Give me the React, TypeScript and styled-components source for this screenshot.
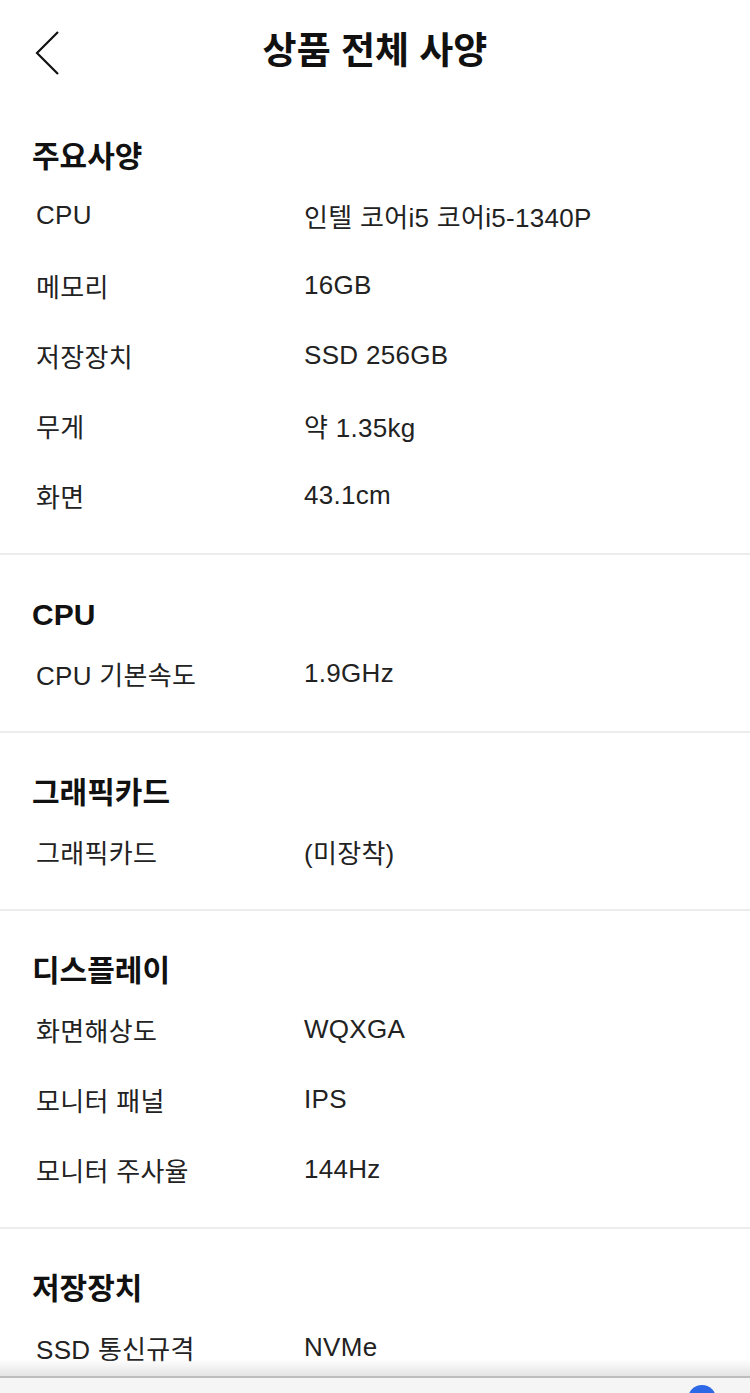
import React from 'react';
import styled, { createGlobalStyle } from 'styled-components';

const GlobalStyle = createGlobalStyle`
  html, body {
    margin: 0;
    padding: 0;
    background: #ffffff;
  }
  body {
    font-family: "Liberation Sans", "Noto Sans CJK KR", sans-serif;
    color: #1c1c1c;
  }
`;

interface SpecRow {
  label: string;
  value: string;
}

interface SpecGroup {
  title: string;
  rows: SpecRow[];
}

const groups: SpecGroup[] = [
  {
    title: '주요사양',
    rows: [
      { label: 'CPU', value: '인텔 코어i5 코어i5-1340P' },
      { label: '메모리', value: '16GB' },
      { label: '저장장치', value: 'SSD 256GB' },
      { label: '무게', value: '약 1.35kg' },
      { label: '화면', value: '43.1cm' }
    ]
  },
  {
    title: 'CPU',
    rows: [{ label: 'CPU 기본속도', value: '1.9GHz' }]
  },
  {
    title: '그래픽카드',
    rows: [{ label: '그래픽카드', value: '(미장착)' }]
  },
  {
    title: '디스플레이',
    rows: [
      { label: '화면해상도', value: 'WQXGA' },
      { label: '모니터 패널', value: 'IPS' },
      { label: '모니터 주사율', value: '144Hz' }
    ]
  },
  {
    title: '저장장치',
    rows: [{ label: 'SSD 통신규격', value: 'NVMe' }]
  }
];

const Screen = styled.div`
  position: relative;
  width: 750px;
  height: 1393px;
  overflow: hidden;
  background: #ffffff;
`;

const Header = styled.header`
  position: relative;
  height: 104px;
  display: flex;
  align-items: center;
  justify-content: center;
`;

const BackButton = styled.button`
  position: absolute;
  left: 30px;
  top: 28px;
  width: 34px;
  height: 50px;
  padding: 0;
  border: none;
  background: none;
  display: flex;
  align-items: center;
  justify-content: center;
`;

const Title = styled.h1`
  margin: 0;
  font-size: 37px;
  font-weight: 700;
  line-height: 44px;
  color: #111111;
`;

const Section = styled.section<{ $first?: boolean }>`
  padding: ${p => (p.$first ? '33px' : '40px')} 32px 23px;
  border-bottom: 2px solid #ececec;
`;

const SectionTitle = styled.h2`
  margin: 0 0 3px;
  height: 40px;
  font-size: 30px;
  font-weight: 700;
  line-height: 40px;
  color: #111111;
`;

const Row = styled.div`
  display: flex;
  align-items: center;
  height: 70px;
  padding-left: 4px;
  font-size: 26px;
  color: #222222;
  letter-spacing: 0.3px;
`;

const Label = styled.div`
  width: 268px;
  flex-shrink: 0;
`;

const Value = styled.div`
  flex: 1;
`;

const BottomBar = styled.div`
  position: absolute;
  left: 0;
  right: 0;
  bottom: 0;
  height: 34px;
  display: flex;
  flex-direction: column;
`;

const BarShade = styled.div`
  height: 17px;
  background: linear-gradient(to bottom, rgba(235, 235, 235, 0) 0%, rgba(225, 225, 225, 0.9) 100%);
`;

const BarBody = styled.div`
  position: relative;
  flex: 1;
  border-top: 2px solid #bdbdbd;
  background: #f5f5f5;
`;

const BlueDot = styled.span`
  position: absolute;
  left: 688px;
  top: 7px;
  width: 28px;
  height: 28px;
  border-radius: 50%;
  background: #2d68e6;
`;

export default function App() {
  return (
    <Screen>
      <GlobalStyle />
      <Header>
        <BackButton aria-label="뒤로">
          <svg width="26" height="46" viewBox="0 0 26 46" fill="none">
            <polyline points="24,2 3,23 24,44" stroke="#111" strokeWidth="2.2" fill="none" />
          </svg>
        </BackButton>
        <Title>상품 전체 사양</Title>
      </Header>
      {groups.map((group, i) => (
        <Section key={group.title + i} $first={i === 0}>
          <SectionTitle>{group.title}</SectionTitle>
          {group.rows.map(row => (
            <Row key={row.label}>
              <Label>{row.label}</Label>
              <Value>{row.value}</Value>
            </Row>
          ))}
        </Section>
      ))}
      <BottomBar>
        <BarShade />
        <BarBody>
          <BlueDot />
        </BarBody>
      </BottomBar>
    </Screen>
  );
}
